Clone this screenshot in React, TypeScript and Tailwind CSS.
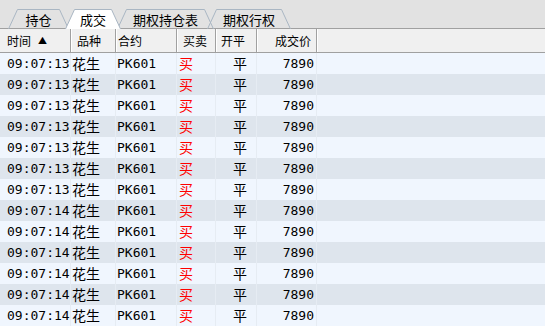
import * as React from 'react'

const cjk = '"Noto Sans CJK SC", "Noto Sans", sans-serif'
const mono = '"DejaVu Sans Mono", "Noto Sans CJK SC", monospace'

const cols = 'grid grid-cols-[71px_45px_61px_39px_41px_60px_1fr]'

const tabs = [
  { label: '持仓', w: 61, ml: 8, active: false },
  { label: '成交', w: 56, ml: -4, active: true },
  { label: '期权持仓表', w: 97, ml: -4, active: false },
  { label: '期权行权', w: 84, ml: -7, active: false },
]

const rows = Array.from({ length: 13 }, (_, i) => ({
  time: i < 7 ? '09:07:13' : '09:07:14',
  name: '花生',
  code: 'PK601',
  side: '买',
  open: '平',
  price: '7890',
}))

const Tab: React.FunctionComponent<{ label: string; w: number; ml: number; active: boolean }> = ({ label, w, ml, active }) => (
  <div
    className={`relative -mb-px flex h-[20px] shrink-0 items-center justify-center ${active ? 'z-10' : ''}`}
    style={{ width: w, marginLeft: ml }}
  >
    <svg className="absolute inset-0" width={w} height={20}>
      <path
        d={`M0.5 20 L9.5 0.5 L${w - 9.5} 0.5 L${w - 0.5} 20`}
        fill={active ? '#ffffff' : 'none'}
        stroke="#a9b6c3"
        strokeWidth={1}
      />
    </svg>
    <span className="relative pt-px text-[13px] leading-none text-black">{label}</span>
  </div>
)

export default function App() {
  return (
    <div className="h-[326px] w-[545px] overflow-hidden bg-[#f0f6fe]" style={{ fontFamily: cjk }}>
      <div className="flex h-[29px] items-end border-b border-[#a0a0a0] bg-[#e2e2e2]">
        {tabs.map((t) => (
          <Tab key={t.label} {...t} />
        ))}
      </div>

      <div className={`${cols} h-[24px] border-b border-[#a0a0a0] bg-[#f0f0f0] text-[12px] leading-none text-black`}>
        <div className="flex items-center border-r border-[#a0a0a0] pl-[7px]">
          时间<span className="ml-[7px] text-[9px]">▲</span>
        </div>
        <div className="flex items-center border-r border-[#a0a0a0] pl-[6px] shadow-[inset_1px_0_0_#fff]">品种</div>
        <div className="flex items-center border-r border-[#a0a0a0] pl-[2px] shadow-[inset_1px_0_0_#fff]">合约</div>
        <div className="flex items-center border-r border-[#a0a0a0] pl-[6px] shadow-[inset_1px_0_0_#fff]">买卖</div>
        <div className="flex items-center border-r border-[#a0a0a0] pl-[5px] shadow-[inset_1px_0_0_#fff]">开平</div>
        <div className="flex items-center justify-end border-r border-[#a0a0a0] pr-[5px] shadow-[inset_1px_0_0_#fff]">成交价</div>
        <div className="shadow-[inset_1px_0_0_#fff]" />
      </div>

      {rows.map((r, i) => (
        <div
          key={i}
          className={`${cols} h-[21px] text-black ${i % 2 === 0 ? 'bg-[#f0f6fe]' : 'bg-[#dee5ed]'}`}
        >
          <div className="flex items-center overflow-hidden whitespace-nowrap border-r border-[#e6ecf3] pl-[7px] text-[13px]" style={{ fontFamily: mono }}>
            {r.time}
          </div>
          <div className="flex items-center border-r border-[#e6ecf3] pl-[1px] text-[14px]">{r.name}</div>
          <div className="flex items-center border-r border-[#e6ecf3] pl-[1px] text-[13px]" style={{ fontFamily: mono }}>
            {r.code}
          </div>
          <div className="flex items-center border-r border-[#e6ecf3] pl-[2px] text-[14px] text-[#ff0000]">{r.side}</div>
          <div className="flex items-center border-r border-[#e6ecf3] pl-[17px] text-[14px]">{r.open}</div>
          <div className="flex items-center justify-end border-r border-[#e6ecf3] pr-[2px] text-[13px]" style={{ fontFamily: mono }}>
            {r.price}
          </div>
          <div />
        </div>
      ))}
    </div>
  )
}
